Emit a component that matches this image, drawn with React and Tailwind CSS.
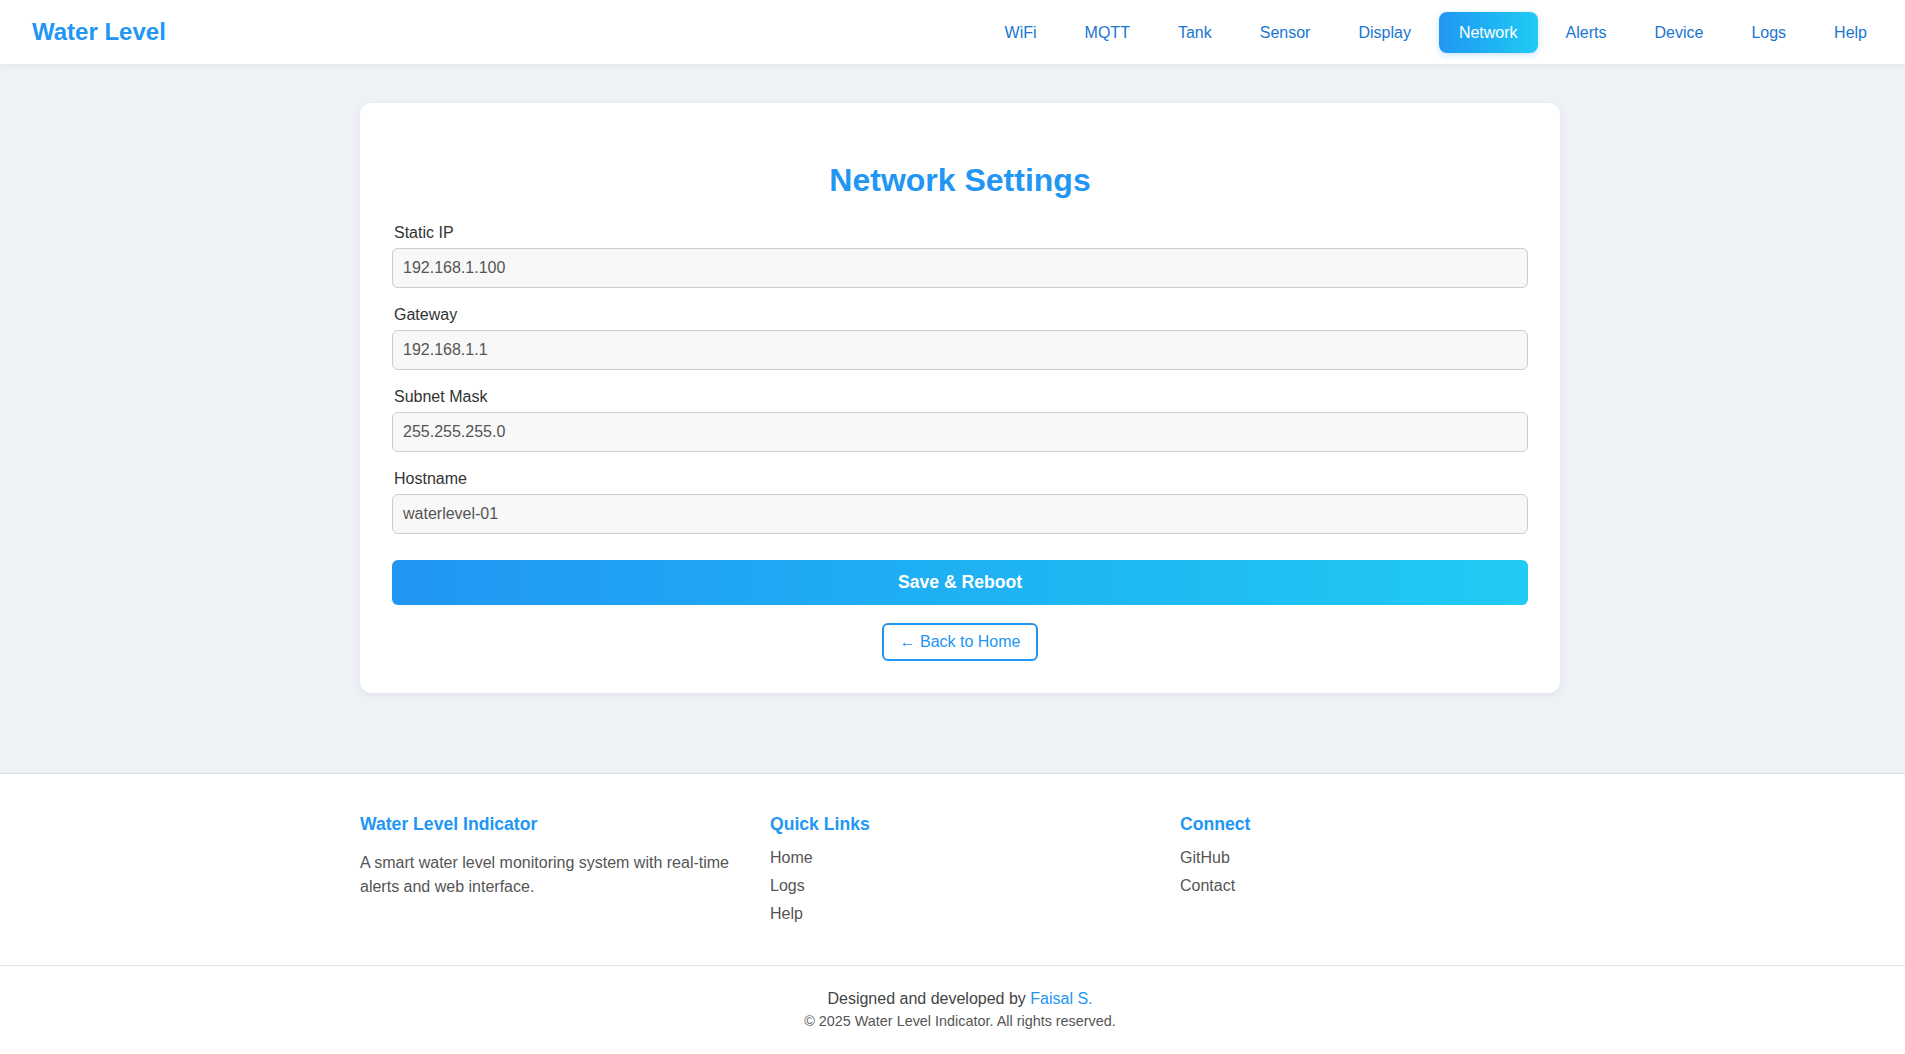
import React from "react";

const NAV = ["WiFi", "MQTT", "Tank", "Sensor", "Display", "Network", "Alerts", "Device", "Logs", "Help"];

const FIELDS = [
  { label: "Static IP", value: "192.168.1.100" },
  { label: "Gateway", value: "192.168.1.1" },
  { label: "Subnet Mask", value: "255.255.255.0" },
  { label: "Hostname", value: "waterlevel-01" },
];

export default function App() {
  return (
    <div
      className="min-h-screen flex flex-col bg-[#eef2f7] text-[#333]"
      style={{ fontFamily: '"Liberation Sans", Arial, sans-serif' }}
    >
      {/* Top bar */}
      <header className="h-16 bg-white flex items-center justify-between pl-8 pr-[18px] shadow-[0_2px_4px_rgba(0,0,0,0.04)]">
        <a className="text-2xl font-bold text-[#2196f3]">Water Level</a>
        <nav className="flex items-center gap-2">
          {NAV.map((item) =>
            item === "Network" ? (
              <a
                key={item}
                className="px-5 py-[11px] rounded-lg text-white leading-[19px] bg-gradient-to-r from-[#2196f3] to-[#21cbf3] shadow-[0_2px_6px_rgba(33,150,243,0.25)]"
              >
                {item}
              </a>
            ) : (
              <a key={item} className="px-5 py-[11px] text-[#1976d2] leading-[19px]">
                {item}
              </a>
            )
          )}
        </nav>
      </header>

      {/* Settings card */}
      <main className="flex-1 pt-[39px] pb-[80px] pl-[15px]">
        <div className="w-[1200px] mx-auto bg-white rounded-xl p-8 shadow-[0_2px_10px_rgba(0,0,0,0.06)]">
          <h2 className="text-[32px] font-bold text-[#2196f3] text-center leading-[37px] mt-[27px] mb-[25px]">
            Network Settings
          </h2>
          <form onSubmit={(e) => e.preventDefault()}>
            {FIELDS.map((f) => (
              <div key={f.label} className="mb-[18px]">
                <label className="block px-[2px] mb-[6px] leading-[18px] text-[#333]">{f.label}</label>
                <input
                  defaultValue={f.value}
                  className="w-full h-10 px-[10px] border border-[#ccc] rounded-md bg-[#f8f8f8] text-[#555] outline-none"
                />
              </div>
            ))}
            <button
              type="submit"
              className="w-full mt-[8px] h-[45px] rounded-md text-white font-bold text-[17.6px] bg-gradient-to-r from-[#2196f3] to-[#21cbf3]"
            >
              Save &amp; Reboot
            </button>
          </form>
          <div className="flex justify-center mt-[18px]">
            <a className="px-4 py-2 leading-[18px] border-2 border-[#2196f3] rounded-md text-[#2196f3]">
              ← Back to Home
            </a>
          </div>
        </div>
      </main>

      {/* Footer */}
      <footer className="bg-white border-t border-[#dde1e6]">
        <div className="pl-[15px]">
          <div className="w-[1200px] mx-auto grid grid-cols-3 gap-[30px] pt-10 pb-[42px]">
            <div>
              <h3 className="text-[17.6px] font-bold text-[#2196f3] leading-5 mb-[17px]">Water Level Indicator</h3>
              <p className="leading-6 text-[#555]">
                A smart water level monitoring system with real-time alerts and web interface.
              </p>
            </div>
            <div>
              <h3 className="text-[17.6px] font-bold text-[#2196f3] leading-5 mb-[15px]">Quick Links</h3>
              <ul className="flex flex-col gap-[10px] text-[#555] leading-[18px]">
                <li>Home</li>
                <li>Logs</li>
                <li>Help</li>
              </ul>
            </div>
            <div>
              <h3 className="text-[17.6px] font-bold text-[#2196f3] leading-5 mb-[15px]">Connect</h3>
              <ul className="flex flex-col gap-[10px] text-[#555] leading-[18px]">
                <li>GitHub</li>
                <li>Contact</li>
              </ul>
            </div>
          </div>
        </div>
        <div className="border-t border-[#e2e2e2] pt-6 pb-6 pl-[15px] text-center">
          <p className="leading-[18px] text-[#444]">
            Designed and developed by <a className="text-[#2196f3]">Faisal S.</a>
          </p>
          <p className="mt-[5px] text-[14.4px] leading-[17px] text-[#555]">
            © 2025 Water Level Indicator. All rights reserved.
          </p>
        </div>
      </footer>
    </div>
  );
}
